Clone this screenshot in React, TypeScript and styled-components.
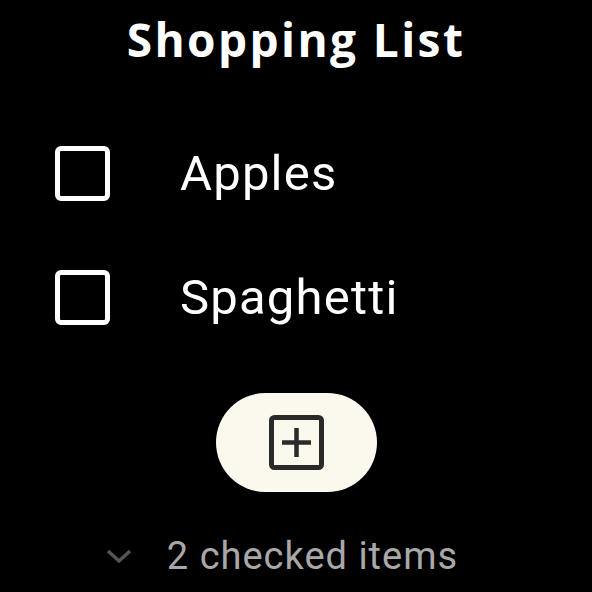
import React from "react";
import styled, { createGlobalStyle } from "styled-components";

const GlobalStyle = createGlobalStyle`
    html, body {
        margin: 0;
        padding: 0;
        background: #000;
        overflow: hidden;
    }
`;

const Screen = styled.div`
    width: 592px;
    height: 592px;
    background: #000;
    display: flex;
    flex-direction: column;
    font-family: Roboto, "Noto Sans", sans-serif;
`;

const Header = styled.h1`
    margin: 0;
    height: 78px;
    display: flex;
    align-items: center;
    justify-content: center;
    color: #fff;
    font-family: "Open Sans", Roboto, sans-serif;
    font-size: 46px;
    font-weight: 700;
    letter-spacing: 2.4px;
`;

const List = styled.ul`
    list-style: none;
    margin: 33px 0 0;
    padding: 0 0 0 55px;
`;

const Row = styled.li`
    height: 124px;
    display: flex;
    align-items: center;
    gap: 70px;
`;

const Box = styled.span`
    box-sizing: border-box;
    width: 55px;
    height: 55px;
    border: 5px solid #fff;
    border-radius: 6px;
`;

const Label = styled.span`
    color: #fff;
    font-size: 49px;
    font-weight: 400;
    letter-spacing: 1.2px;
`;

const AddButton = styled.button`
    align-self: center;
    margin-top: 34px;
    width: 161px;
    height: 99px;
    border: none;
    border-radius: 50px;
    background: #fbf8ee;
    display: flex;
    align-items: center;
    justify-content: center;
    padding: 0;
`;

const Footer = styled.div`
    margin-top: 39px;
    height: 50px;
    display: flex;
    align-items: center;
    justify-content: center;
    gap: 35px;
    padding-right: 28px;
`;

const FooterText = styled.span`
    color: #a8a8a8;
    font-size: 38px;
    letter-spacing: 1px;
`;

const items = ["Apples", "Spaghetti"];

const App: React.FC = () => {
    return (
        <Screen>
            <GlobalStyle />
            <Header>Shopping List</Header>
            <List>
                {items.map(item => (
                    <Row key={item}>
                        <Box />
                        <Label>{item}</Label>
                    </Row>
                ))}
            </List>
            <AddButton>
                <svg width="55" height="55" viewBox="0 0 55 55">
                    <rect x="2.5" y="2.5" width="50" height="50" rx="3" fill="none" stroke="#2a2a2a" strokeWidth="5" />
                    <path d="M13 27.5h29M27.5 13v29" stroke="#2a2a2a" strokeWidth="4.5" />
                </svg>
            </AddButton>
            <Footer>
                <svg width="26" height="16" viewBox="0 0 26 16">
                    <path d="M2 3l11 10 11-10" fill="none" stroke="#555" strokeWidth="3.5" />
                </svg>
                <FooterText>2 checked items</FooterText>
            </Footer>
        </Screen>
    );
};

export default App;
